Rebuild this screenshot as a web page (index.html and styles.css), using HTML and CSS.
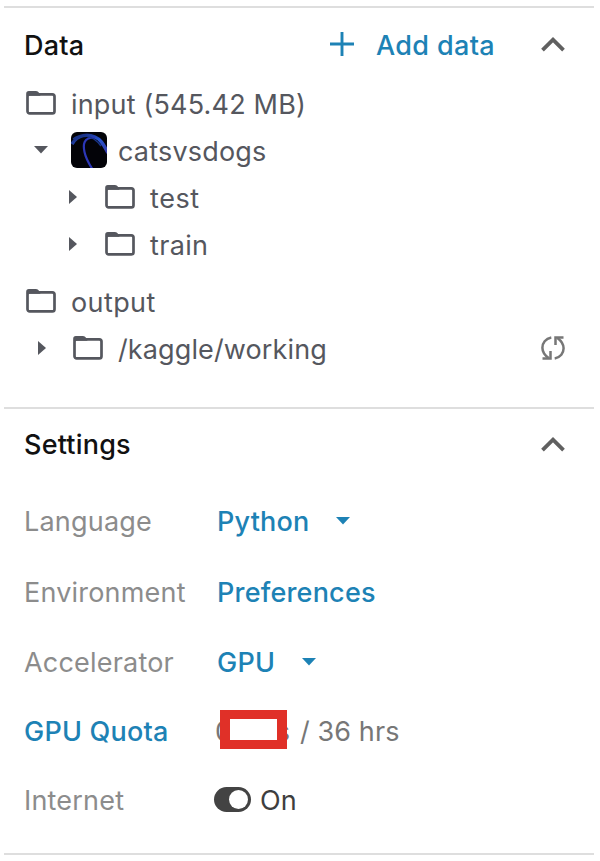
FILE: index.html
```html
<!DOCTYPE html>
<html lang="en">
<head>
<meta charset="utf-8">
<title>Notebook sidebar</title>
<link rel="stylesheet" href="styles.css">
</head>
<body>
<svg class="defs" width="0" height="0">
  <symbol id="folder" viewBox="0 0 30 24"><rect x="1.5" y="3.4" width="27" height="19" rx="2.2" fill="none" stroke="currentColor" stroke-width="2.7"/><path d="M.2 5V2.6Q.2 0 2.8 0H10Q12 0 13 1.8L14.5 4.7H.2Z" fill="currentColor"/></symbol>
  <symbol id="down" viewBox="0 0 14 8"><path d="M0 0H14L7 7.5Z" fill="currentColor"/></symbol>
  <symbol id="right" viewBox="0 0 8 14"><path d="M0 0V14L8 7Z" fill="currentColor"/></symbol>
  <symbol id="up" viewBox="0 0 24 15"><path d="M1.5 13.2L12 2.7L22.5 13.2" fill="none" stroke="currentColor" stroke-width="3.8"/></symbol>
</svg>
<main class="sidebar">
  <section class="panel data">
    <header class="head">
      <h2 class="title">Data</h2>
      <button class="add"><svg class="plus" viewBox="0 0 24 24"><path d="M12 0V24M0 12H24" stroke="currentColor" stroke-width="2.9"/></svg><span>Add data</span></button>
      <svg class="up"><use href="#up"/></svg>
    </header>
    <div class="row root"><svg class="folder"><use href="#folder"/></svg><span>input (545.42 MB)</span></div>
    <div class="row level1"><svg class="down"><use href="#down"/></svg>
      <svg class="thumb" viewBox="0 0 36 36"><defs><clipPath id="round"><rect width="36" height="36" rx="6"/></clipPath><linearGradient id="glow" x1="0" y1="0" x2="1" y2="1"><stop stop-color="#14226a"/><stop offset=".5" stop-color="#2855d0"/><stop offset="1" stop-color="#3437a8"/></linearGradient></defs><g clip-path="url(#round)"><rect width="36" height="36" fill="#030308"/><path d="M1 12C7 2 17 2 24 5S33 14 37 21" fill="none" stroke="url(#glow)" stroke-width="3.5"/><path d="M24 5.500C12 5 12 13 13.500 20S18 32 22 38" fill="none" stroke="#2c37b7" stroke-width="2.2"/><path d="M2 7C9 2 21 2 30 14" fill="none" stroke="#1a3588" stroke-width="1.5"/></g></svg>
      <span>catsvsdogs</span></div>
    <div class="row level2"><svg class="right"><use href="#right"/></svg><svg class="folder"><use href="#folder"/></svg><span class="leaf">test</span></div>
    <div class="row level2"><svg class="right"><use href="#right"/></svg><svg class="folder"><use href="#folder"/></svg><span class="leaf train">train</span></div>
    <div class="row root output"><svg class="folder"><use href="#folder"/></svg><span>output</span></div>
    <div class="row level1 working"><svg class="right"><use href="#right"/></svg><svg class="folder"><use href="#folder"/></svg><span>/kaggle/working</span>
      <svg class="sync" viewBox="0 0 24 24"><g id="arc" fill="none" stroke="currentColor" stroke-width="2.5"><path d="M10.300 1.500C4.500 2.500 1.400 7 1.400 11.700C1.400 16 3.500 19 7.600 22"/><path d="M1.500 22.500H9.500V15"/></g><use href="#arc" transform="rotate(180 12 12)"/></svg></div>
  </section>
  <section class="panel settings">
    <header class="head"><h2 class="title">Settings</h2><svg class="up"><use href="#up"/></svg></header>
    <dl class="grid">
      <dt>Language</dt><dd class="link"><span>Python</span><svg class="down"><use href="#down"/></svg></dd>
      <dt>Environment</dt><dd class="link"><span>Preferences</span></dd>
      <dt>Accelerator</dt><dd class="link"><span>GPU</span><svg class="down"><use href="#down"/></svg></dd>
      <dt class="link">GPU Quota</dt><dd class="quota"><span class="used"><span>0</span><span>s</span><span class="mask"></span></span><span>/ 36 hrs</span></dd>
      <dt>Internet</dt><dd class="on"><span class="toggle"></span><span>On</span></dd>
    </dl>
  </section>
</main>
</body>
</html>
```
FILE: styles.css
```css
* { box-sizing: border-box; }
body { margin: 0; background: #fff; font: 400 27px/32px Inter, sans-serif; color: #55575e; white-space: nowrap; }
svg { display: block; flex: none; }
.defs { position: absolute; }
.sidebar { width: 590px; height: 849px; margin: 6px 0 0 4px; border-bottom: 2px solid #dedede; }
.panel { border-top: 2px solid #dedede; }
.data { height: 401px; }
.head { display: flex; align-items: center; height: 73px; padding: 0 29px 0 20px; }
.data .head { padding-top: 2px; }
.settings .head { padding-bottom: 2px; }
.title { flex: 1; margin: 0; font-size: 27px; font-weight: 500; letter-spacing: .2px; color: #111; }
.add { display: flex; align-items: center; gap: 22px; margin-right: 46px; padding: 0; border: 0; background: none; font: inherit; font-weight: 500; letter-spacing: .35px; color: #1d82b5; }
.plus { width: 24px; height: 24px; margin-top: -4px; }
.up { width: 24px; height: 15px; margin-top: -3px; color: #606060; }
.settings .up { margin-top: 0; }
.row { display: flex; align-items: center; height: 47px; letter-spacing: .18px; }
.folder { width: 30px; height: 24px; margin: -3px 15px 0 0; }
.down { width: 14px; height: 8px; margin-top: -3px; }
.right { width: 8px; height: 14px; margin-top: -4px; }
.root { padding-left: 22px; }
.level1 { padding-left: 30px; }
.level1 .down { margin-right: 23px; }
.thumb { width: 36px; height: 36px; margin: -4px 11px 0 0; }
.level2 { padding-left: 65px; }
.level2 .right { margin-right: 28px; }
.leaf { letter-spacing: .6px; }
.train { letter-spacing: .35px; }
.output { margin-top: 10px; letter-spacing: .4px; }
.working { padding: 0 29px 0 34px; letter-spacing: .12px; }
.working .right { margin-right: 27px; }
.sync { width: 24px; height: 24px; margin: -3px 0 0 auto; color: #777; }
.grid { display: grid; grid-template-columns: 193px 1fr; grid-template-rows: 70px 71px 70px 68px 70px; align-items: center; margin: 5px 0 0; padding-left: 20px; color: #8c8c8c; letter-spacing: .2px; }
.grid dd { display: flex; align-items: center; margin: 0; }
.grid .link { font-weight: 500; color: #1d82b5; }
.grid .down { margin-left: 27px; }
.grid .quota { gap: 10px; color: #777; letter-spacing: .1px; }
.used { position: relative; display: flex; justify-content: space-between; width: 75px; margin-left: -2px; }
.mask { position: absolute; left: 5px; top: -6px; width: 67px; height: 39px; border: solid #e03028; border-width: 9px 10px; background: #fff; }
.grid .on { gap: 9px; color: #3e3e3e; letter-spacing: 0; }
.toggle { display: flex; justify-content: flex-end; width: 37px; height: 25px; margin: -3px 0 0 -3px; padding: 3px; border-radius: 13px; background: #434343; }
.toggle::before { content: ""; width: 19px; height: 19px; border-radius: 50%; background: #fff; }
```
